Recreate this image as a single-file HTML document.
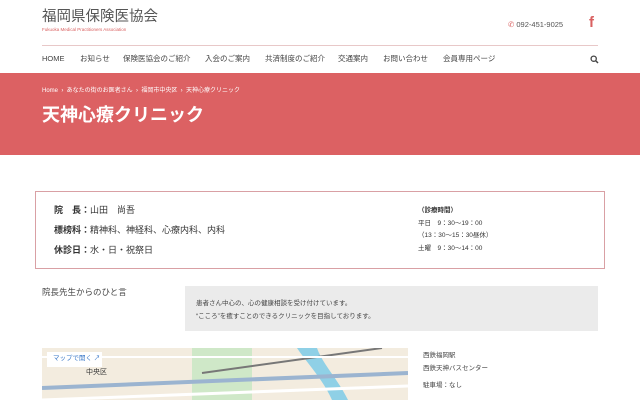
<!DOCTYPE html>
<html><head><meta charset="utf-8"><style>
*{margin:0;padding:0;box-sizing:border-box}
body{width:640px;height:400px;overflow:hidden;background:#fff;font-family:"Liberation Sans","Noto Sans CJK JP",sans-serif;color:#333;position:relative}
.a{position:absolute;white-space:nowrap;line-height:1}
.n{position:absolute;top:55px;font-size:7.5px;color:#444;white-space:nowrap;line-height:1}
</style></head><body>
<div class="a" style="left:42px;top:10px;font-size:14.5px;color:#555">福岡県保険医協会</div>
<div class="a" style="left:42px;top:28px;font-size:4.5px;color:#d96060">Fukuoka Medical Practitioners Association</div>
<div class="a" style="left:508px;top:21px;font-size:7.5px;color:#555"><span style="color:#d96060">&#9990;</span> 092-451-9025</div>
<div class="a" style="left:589px;top:15px;font-size:15px;color:#d96060;font-weight:bold">f</div>
<div class="a" style="left:42px;top:45px;width:556px;height:1px;background:#e8c8c8"></div>
<div class="n" style="left:42px">HOME</div>
<div class="n" style="left:80px">お知らせ</div>
<div class="n" style="left:123px">保険医協会のご紹介</div>
<div class="n" style="left:205px">入会のご案内</div>
<div class="n" style="left:265px">共済制度のご紹介</div>
<div class="n" style="left:338px">交通案内</div>
<div class="n" style="left:383px">お問い合わせ</div>
<div class="n" style="left:443px">会員専用ページ</div>
<svg class="a" style="left:590px;top:55px" width="9" height="9"><circle cx="3.7" cy="3.7" r="2.6" fill="none" stroke="#444" stroke-width="1.3"/><line x1="5.6" y1="5.6" x2="8" y2="8" stroke="#444" stroke-width="1.5"/></svg>
<div class="a" style="left:0;top:73px;width:640px;height:82px;background:#dc6163"></div>
<div class="a" style="left:42px;top:88px;font-size:6px;color:#fff">Home &nbsp;›&nbsp; あなたの街のお医者さん &nbsp;›&nbsp; 福岡市中央区 &nbsp;›&nbsp; 天神心療クリニック</div>
<div class="a" style="left:42px;top:106px;font-size:18px;color:#fff;font-weight:bold">天神心療クリニック</div>
<div class="a" style="left:35px;top:191px;width:570px;height:78px;border:1.5px solid #d9a0a4"></div>
<div class="a" style="left:54px;top:206px;font-size:9px;color:#333"><b>院　長：</b>山田　尚吾</div>
<div class="a" style="left:54px;top:226px;font-size:9px;color:#333"><b>標榜科：</b>精神科、神経科、心療内科、内科</div>
<div class="a" style="left:54px;top:246px;font-size:9px;color:#333"><b>休診日：</b>水・日・祝祭日</div>
<div class="a" style="left:418px;top:205px;font-size:6.5px;color:#333;line-height:12.5px"><b>（診療時間）</b><br>平日　9：30～19：00<br>（13：30～15：30昼休）<br>土曜　9：30～14：00</div>
<div class="a" style="left:42px;top:288px;font-size:8.5px;color:#444">院長先生からのひと言</div>
<div class="a" style="left:185px;top:286px;width:413px;height:45px;background:#ebebeb"></div>
<div class="a" style="left:196px;top:297px;font-size:6.5px;color:#444;line-height:13px">患者さん中心の、心の健康相談を受け付けています。<br>“こころ”を癒すことのできるクリニックを目指しております。</div>
<div class="a" style="left:42px;top:348px;width:366px;height:52px;background:#f3ecdf;overflow:hidden">
<svg width="366" height="52"><rect x="150" y="0" width="60" height="52" fill="#cfe8c8"/><path d="M255 0 C265 15 280 30 290 52 L306 52 C295 30 280 15 275 0Z" fill="#8fd0e6"/><path d="M0 40 L366 25" stroke="#9bb4d0" stroke-width="4"/><path d="M160 25 L340 0" stroke="#777" stroke-width="2"/><path d="M0 52 L366 38" stroke="#fff" stroke-width="3"/><rect x="0" y="8" width="366" height="2" fill="#fff"/></svg>
</div>
<div class="a" style="left:47px;top:352px;width:55px;height:15px;background:#fff"></div>
<div class="a" style="left:53px;top:356px;font-size:6.5px;color:#3a78c8">マップで開く ↗</div>
<div class="a" style="left:86px;top:369px;font-size:7px;color:#333">中央区</div>
<div class="a" style="left:423px;top:349px;font-size:6.5px;color:#444;line-height:13px">西鉄福岡駅<br>西鉄天神バスセンター</div>
<div class="a" style="left:423px;top:383px;font-size:6.5px;color:#444">駐車場：なし</div>
</body></html>
